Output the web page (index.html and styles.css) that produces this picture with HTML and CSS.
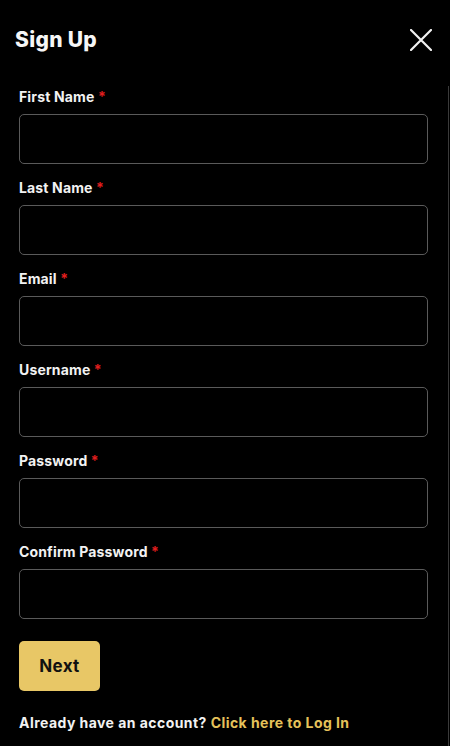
FILE: index.html
```html
<!DOCTYPE html>
<html lang="en">
<head>
<meta charset="utf-8">
<title>Sign Up</title>
<link rel="stylesheet" href="styles.css">
</head>
<body>
<div class="panel">
  <header class="header">
    <h1 class="title">Sign Up</h1>
    <button class="close" aria-label="Close">
      <svg width="22" height="22" viewBox="0 0 22 22"><path d="M1 1L21 21M21 1L1 21" stroke="#f2f2f2" stroke-width="2.2" stroke-linecap="round" fill="none"/></svg>
    </button>
  </header>
  <form class="form">
    <div class="field"><label class="label">First Name <span class="req">*</span></label><input class="input" type="text"></div>
    <div class="field"><label class="label">Last Name <span class="req">*</span></label><input class="input" type="text"></div>
    <div class="field"><label class="label">Email <span class="req">*</span></label><input class="input" type="email"></div>
    <div class="field"><label class="label">Username <span class="req">*</span></label><input class="input" type="text"></div>
    <div class="field"><label class="label">Password <span class="req">*</span></label><input class="input" type="password"></div>
    <div class="field"><label class="label">Confirm Password <span class="req">*</span></label><input class="input" type="password"></div>
    <button class="next" type="button">Next</button>
    <p class="footer">Already have an account? <a class="link" href="#">Click here to Log In</a></p>
  </form>
</div>
</body>
</html>
```
FILE: styles.css
```css
html, body {
  margin: 0;
  padding: 0;
  background: #000;
}
body {
  font-family: Inter, "Open Sans", sans-serif;
  color: #f4f4f4;
  width: 450px;
  height: 746px;
  overflow: hidden;
}
.panel {
  height: 746px;
  box-sizing: border-box;
  position: relative;
}
.panel::after {
  content: "";
  position: absolute;
  right: 1px;
  top: 86px;
  bottom: 0;
  width: 1px;
  background: #3a3a3a;
}
.header {
  display: flex;
  justify-content: space-between;
  align-items: center;
  height: 32px;
  padding: 24px 18px 0 15px;
}
.title {
  margin: 0;
  font-size: 21px;
  font-weight: 800;
  line-height: 32px;
  color: #f6f6f6;
  letter-spacing: 0.3px;
}
.close {
  background: none;
  border: 0;
  padding: 0;
  width: 22px;
  height: 22px;
  display: flex;
  cursor: pointer;
}
.form {
  display: flex;
  flex-direction: column;
  padding: 33px 22px 0 19px;
  margin: 0;
}
.field {
  display: flex;
  flex-direction: column;
  gap: 9px;
  margin-bottom: 16px;
}
.field:nth-child(6) {
  margin-bottom: 22px;
}
.label {
  font-size: 14px;
  font-weight: 700;
  line-height: 16px;
  color: #f2f2f2;
  letter-spacing: 0.15px;
}
.req {
  color: #e01e1e;
}
.input {
  box-sizing: border-box;
  height: 50px;
  width: 100%;
  background: #000;
  border: 1px solid #5a5a5a;
  border-radius: 5px;
  color: #fff;
  font: inherit;
  padding: 0 12px;
}
.next {
  align-self: flex-start;
  width: 81px;
  height: 50px;
  border: 0;
  border-radius: 5px;
  background: #e8c766;
  color: #111;
  font-family: inherit;
  font-size: 17px;
  font-weight: 700;
  letter-spacing: 0.3px;
  cursor: pointer;
}
.footer {
  margin: 24px 0 0;
  font-size: 14px;
  font-weight: 700;
  line-height: 16px;
  color: #f2f2f2;
  letter-spacing: 0.45px;
}
.link {
  color: #e5c25a;
  text-decoration: none;
}
```
